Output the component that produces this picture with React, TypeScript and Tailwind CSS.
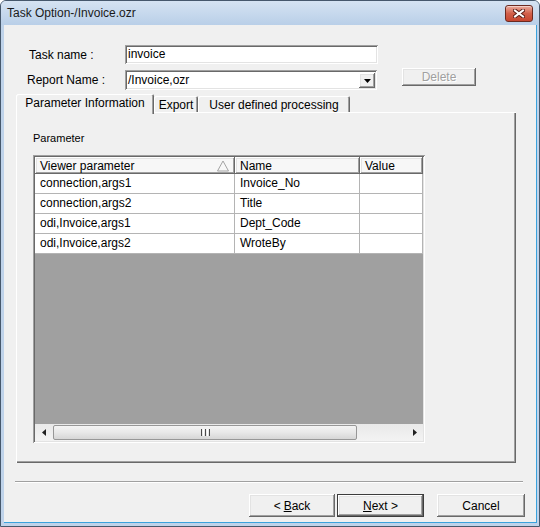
import React from 'react'

// classic 3D edges
const raised =
  'shadow-[inset_-1px_-1px_0_#696969,inset_1px_1px_0_#ffffff,inset_-2px_-2px_0_#a0a0a0,inset_2px_2px_0_#e3e3e3]'
const sunken =
  'shadow-[inset_1px_1px_0_#a0a0a0,inset_-1px_-1px_0_#ffffff,inset_2px_2px_0_#696969,inset_-2px_-2px_0_#e3e3e3]'
const tabEdge = 'shadow-[inset_1px_1px_0_#ffffff,inset_-1px_0_0_#696969,inset_-2px_0_0_#a0a0a0]'

const rows: [string, string][] = [
  ['connection,args1', 'Invoice_No'],
  ['connection,args2', 'Title'],
  ['odi,Invoice,args1', 'Dept_Code'],
  ['odi,Invoice,args2', 'WroteBy'],
]

const Button: React.FC<{ w: string; children: React.ReactNode; isDefault?: boolean }> = ({ w, children, isDefault }) => (
  <div
    className={`${w} h-[23px] flex items-center justify-center bg-[#f0f0f0] text-[12px] text-black ${
      isDefault ? 'border border-[#3c3c3c] ' : ''
    }${raised}`}
  >
    {children}
  </div>
)

const App: React.FC = () => {
  return (
    <div className="w-[540px] h-[527px] flex flex-col bg-[#bfd3ea] border border-[#46586c] rounded-t-[6px] overflow-hidden font-['Liberation_Sans',Arial,sans-serif] text-black select-none">
      {/* title bar */}
      <div className="h-[24px] flex items-start justify-between bg-linear-to-b from-[#d5e3f2] to-[#b9cfe8] pl-[6px] pr-[6px]">
        <span className="mt-[5px] text-[12px] leading-[14px] text-[#1a1a1a]">Task Option-/Invoice.ozr</span>
        <div className="mt-[4px] w-[28px] h-[17px] rounded-[3px] border border-[#6b2a20] bg-linear-to-b from-[#e9ab9d] via-[#d2604a] to-[#c7452e] flex items-center justify-center shadow-[inset_0_1px_0_#f4cfc6]">
          <svg width="12" height="9" viewBox="0 0 12 9">
            <path d="M2 1.5 L10 7.5 M10 1.5 L2 7.5" stroke="#5b1f17" strokeWidth="4" strokeLinecap="square" />
            <path d="M2 1.5 L10 7.5 M10 1.5 L2 7.5" stroke="#ffffff" strokeWidth="2" strokeLinecap="square" />
          </svg>
        </div>
      </div>

      {/* frame + body */}
      <div className="flex-1 flex pl-[3px] pr-[2px] pb-[3px]">
        <div className="flex-1 flex flex-col bg-[#f0f0f0] border-r border-b border-[#3aa2dc]">
          {/* task name */}
          <div className="mt-[20px] h-[19px] flex items-center pl-[25px]">
            <span className="w-[96px] text-[12px]">Task name :</span>
            <div className={`w-[253px] h-[19px] bg-white pl-[3px] text-[12px] leading-[19px] ${sunken}`}>invoice</div>
          </div>

          {/* report name */}
          <div className="mt-[4px] h-[22px] flex items-start pl-[23px]">
            <span className="w-[98px] mt-[2px] h-[20px] leading-[20px] text-[12px]">Report Name :</span>
            <div className={`mt-[2px] w-[252px] h-[20px] bg-white flex items-center justify-between pl-[3px] pr-[2px] ${sunken}`}>
              <span className="text-[12px] leading-[20px]">/Invoice,ozr</span>
              <div className={`w-[16px] h-[15px] mt-[1px] bg-[#f0f0f0] flex items-center justify-center ${raised}`}>
                <svg width="7" height="4" viewBox="0 0 7 4">
                  <path d="M0 0 H7 L3.5 4 Z" fill="#000" />
                </svg>
              </div>
            </div>
            <div
              className={`ml-[25px] w-[74px] h-[18px] flex items-center justify-center bg-[#f0f0f0] text-[12px] text-[#a0a0a0] [text-shadow:1px_1px_0_#ffffff] ${raised}`}
            >
              Delete
            </div>
          </div>

          {/* tabs */}
          <div className="mt-[3px] h-[20px] flex items-end pl-[12px]">
            <div className={`relative z-10 w-[138px] h-[20px] -mb-px bg-[#f0f0f0] rounded-t-[2px] flex justify-center pt-[2px] text-[12px] leading-[14px] ${tabEdge}`}>
              Parameter Information
            </div>
            <div className={`w-[44px] h-[16px] mb-px bg-[#f0f0f0] rounded-t-[2px] flex justify-center pt-[2px] text-[12px] leading-[14px] ${tabEdge}`}>
              Export
            </div>
            <div className={`w-[152px] h-[16px] mb-px bg-[#f0f0f0] rounded-t-[2px] flex justify-center pt-[2px] text-[12px] leading-[14px] ${tabEdge}`}>
              User defined processing
            </div>
          </div>

          {/* tab panel */}
          <div className="ml-[12px] -mt-px w-[500px] h-[351px] bg-[#f0f0f0] pt-[19px] pl-[17px] shadow-[inset_1px_1px_0_#ffffff,inset_-1px_-1px_0_#696969,inset_-2px_-2px_0_#a0a0a0]">
            <div className="h-[14px] leading-[14px] text-[11px]">Parameter</div>

            {/* grid */}
            <div className={`mt-[10px] w-[392px] h-[288px] p-[2px] bg-white flex flex-col ${sunken}`}>
              <div className="h-[17px] flex text-[12px]">
                <div className={`w-[200px] flex items-center justify-between pl-[5px] pr-[6px] bg-[#f7f7f7] ${raised}`}>
                  <span>Viewer parameter</span>
                  <svg width="12" height="12" viewBox="0 0 12 12">
                    <path d="M6 1 L11.5 11 H0.5 Z" fill="none" stroke="#a3a3a3" strokeWidth="1" />
                  </svg>
                </div>
                <div className={`w-[125px] flex items-center pl-[5px] bg-[#f7f7f7] ${raised}`}>Name</div>
                <div className={`w-[63px] flex items-center pl-[5px] bg-[#f7f7f7] ${raised}`}>Value</div>
              </div>

              {rows.map(([param, name]) => (
                <div key={param} className="h-[20px] flex text-[12px] leading-[19px] bg-white">
                  <div className="w-[200px] pl-[5px] border-r border-b border-[#b4b4b4]">{param}</div>
                  <div className="w-[125px] pl-[5px] border-r border-b border-[#b4b4b4]">{name}</div>
                  <div className="w-[63px] border-r border-b border-[#b4b4b4]" />
                </div>
              ))}

              <div className="flex-1 bg-[#a0a0a0]" />

              {/* horizontal scrollbar */}
              <div className="h-[17px] flex bg-linear-to-b from-[#e9e9e9] to-[#f3f3f3]">
                <div className="w-[18px] flex items-center justify-center">
                  <svg width="4" height="7" viewBox="0 0 4 7">
                    <path d="M4 0 V7 L0 3.5 Z" fill="#202020" />
                  </svg>
                </div>
                <div className="mt-px w-[304px] h-[15px] rounded-[2px] border border-[#979797] bg-linear-to-b from-[#f4f4f4] via-[#e8e8e8] to-[#d6d6d6] flex items-center justify-center gap-[1px]">
                  <span className="w-px h-[7px] bg-[#4a4a4a]" />
                  <span className="w-px h-[7px] bg-white" />
                  <span className="w-px h-[7px] bg-[#4a4a4a]" />
                  <span className="w-px h-[7px] bg-white" />
                  <span className="w-px h-[7px] bg-[#4a4a4a]" />
                </div>
                <div className="flex-1" />
                <div className="w-[17px] flex items-center justify-center">
                  <svg width="4" height="7" viewBox="0 0 4 7">
                    <path d="M0 0 V7 L4 3.5 Z" fill="#202020" />
                  </svg>
                </div>
              </div>
            </div>
          </div>

          {/* separator */}
          <div className="mt-[18px] ml-[11px] w-[508px] h-[2px] border-t border-[#a0a0a0] border-b border-b-white" />

          {/* buttons */}
          <div className="mt-[11px] flex pl-[245px]">
            <Button w="w-[86px]">
              &lt; <span className="underline ml-[3px]">B</span>ack
            </Button>
            <div className="ml-[2px]">
              <Button w="w-[87px]" isDefault>
                <span className="underline">N</span>ext &gt;
              </Button>
            </div>
            <div className="ml-[13px]">
              <Button w="w-[88px]">Cancel</Button>
            </div>
          </div>
        </div>
      </div>
    </div>
  )
}

export default App
